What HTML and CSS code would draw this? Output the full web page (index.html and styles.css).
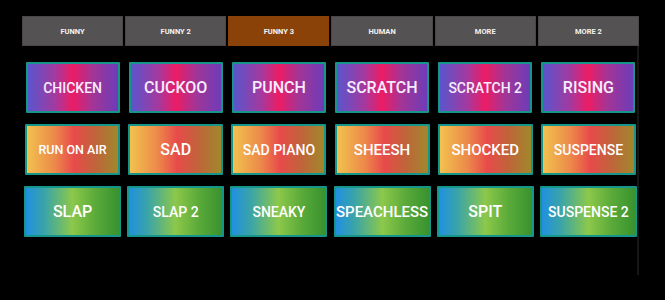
FILE: index.html
```html
<!DOCTYPE html>
<html>
<head>
<meta charset="utf-8">
<link rel="stylesheet" href="styles.css">
</head>
<body>
<div class="app">
  <nav class="tabs">
    <div class="tab">FUNNY</div>
    <div class="tab">FUNNY 2</div>
    <div class="tab active">FUNNY 3</div>
    <div class="tab">HUMAN</div>
    <div class="tab">MORE</div>
    <div class="tab">MORE 2</div>
  </nav>
  <main class="panel">
    <div class="grid">
      <div class="cell"><button class="btn purple f14">CHICKEN</button></div>
      <div class="cell"><button class="btn purple f16">CUCKOO</button></div>
      <div class="cell"><button class="btn purple f16">PUNCH</button></div>
      <div class="cell"><button class="btn purple f16">SCRATCH</button></div>
      <div class="cell"><button class="btn purple f14">SCRATCH 2</button></div>
      <div class="cell"><button class="btn purple f16">RISING</button></div>

      <div class="cell"><button class="btn orange f12">RUN ON AIR</button></div>
      <div class="cell"><button class="btn orange f16">SAD</button></div>
      <div class="cell"><button class="btn orange f14">SAD PIANO</button></div>
      <div class="cell"><button class="btn orange f15">SHEESH</button></div>
      <div class="cell"><button class="btn orange f15">SHOCKED</button></div>
      <div class="cell"><button class="btn orange f14">SUSPENSE</button></div>

      <div class="cell"><button class="btn green f16">SLAP</button></div>
      <div class="cell"><button class="btn green f14">SLAP 2</button></div>
      <div class="cell"><button class="btn green f14">SNEAKY</button></div>
      <div class="cell"><button class="btn green f15">SPEACHLESS</button></div>
      <div class="cell"><button class="btn green f16">SPIT</button></div>
      <div class="cell"><button class="btn green f14">SUSPENSE 2</button></div>
    </div>
  </main>
</div>
</body>
</html>
```

FILE: styles.css
```css
html, body {
  margin: 0;
  padding: 0;
  background: #000;
  width: 665px;
  height: 300px;
  overflow: hidden;
  font-family: Roboto, "Liberation Sans", sans-serif;
}

.app {
  padding: 16px 0 0 22px;
  width: 617px;
}

.tabs {
  display: grid;
  grid-template-columns: repeat(6, 1fr);
  column-gap: 2px;
  height: 30px;
}

.tab {
  background: #545252;
  color: #f2f2f2;
  font-size: 7.5px;
  font-weight: 700;
  display: flex;
  align-items: center;
  justify-content: center;
  box-shadow: inset 0 0 0 1px #484646;
}

.tab.active {
  background: #8a4208;
  box-shadow: none;
}

.panel {
  height: 229px;
  box-sizing: border-box;
  border-right: 2px solid #161616;
}

.grid {
  display: grid;
  grid-template-columns: repeat(6, 1fr);
  column-gap: 2px;
  grid-auto-rows: 51px;
  row-gap: 11px;
  padding-top: 16px;
  margin-right: -2px;
}

.cell {
  display: flex;
  justify-content: center;
}

.btn {
  height: 51px;
  box-sizing: border-box;
  border: 2px solid #16968a;
  border-radius: 1px;
  padding: 0;
  color: #fff;
  font-family: Roboto, "Liberation Sans", sans-serif;
  font-weight: 500;
  white-space: nowrap;
  cursor: pointer;
}

.purple {
  width: 94px;
  color: #f6ecff;
  background: linear-gradient(90deg, #5a55cc 0%, #a33aa0 30%, #ec1c64 50%, #a33596 72%, #6d3cb8 100%);
}

.orange {
  width: 95px;
  background: linear-gradient(90deg, #f2c24e 0%, #ec8a4a 30%, #e84a4a 52%, #c0643a 75%, #a0882c 100%);
}

.green {
  width: 97px;
  background: linear-gradient(90deg, #2090e0 0%, #3aa4a8 20%, #8cc84a 50%, #5aaa3a 75%, #38922e 100%);
}

.f16 { font-size: 16px; }
.f15 { font-size: 15px; }
.f14 { font-size: 14px; }
.f12 { font-size: 12.5px; }
```
